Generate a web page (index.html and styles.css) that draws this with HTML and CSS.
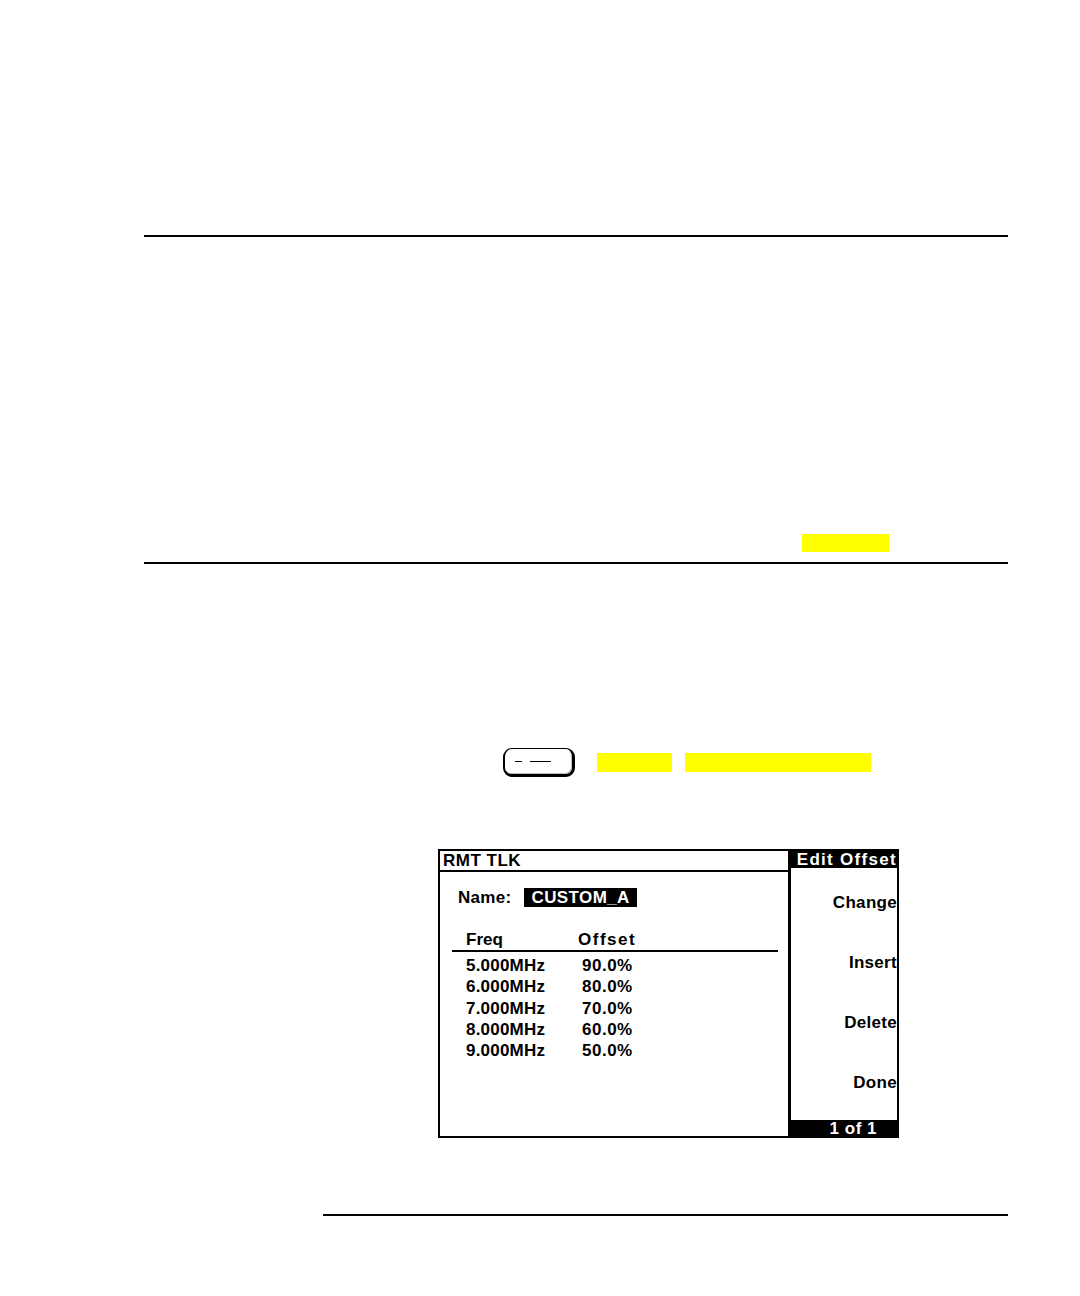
FILE: index.html
```html
<!DOCTYPE html>
<html>
<head>
<meta charset="utf-8">
<title>Edit Offset</title>
<link rel="stylesheet" href="styles.css">
</head>
<body>
<div class="page">
  <div class="rule rule-top"></div>
  <div class="highlight hl-note"></div>
  <div class="rule rule-mid"></div>

  <div class="key-row">
    <div class="key"><span class="dash dash-short"></span><span class="dash dash-long"></span></div>
    <div class="highlight hl-a"></div>
    <div class="highlight hl-b"></div>
  </div>

  <div class="screen">
    <div class="panel">
      <div class="titlebar">RMT TLK</div>
      <div class="name-row"><span class="name-label">Name:</span><span class="name-value">CUSTOM_A</span></div>
      <div class="thead"><span class="c1">Freq</span><span class="c2">Offset</span></div>
      <div class="tbody">
        <div class="trow"><span class="c1">5.000MHz</span><span class="c2">90.0%</span></div>
        <div class="trow"><span class="c1">6.000MHz</span><span class="c2">80.0%</span></div>
        <div class="trow"><span class="c1">7.000MHz</span><span class="c2">70.0%</span></div>
        <div class="trow"><span class="c1">8.000MHz</span><span class="c2">60.0%</span></div>
        <div class="trow"><span class="c1">9.000MHz</span><span class="c2">50.0%</span></div>
      </div>
    </div>
    <div class="softkeys">
      <div class="sk-head">Edit Offset</div>
      <div class="sk-list">
        <div class="sk">Change</div>
        <div class="sk">Insert</div>
        <div class="sk">Delete</div>
        <div class="sk">Done</div>
      </div>
      <div class="sk-foot">1 of 1</div>
    </div>
  </div>

  <div class="rule rule-bottom"></div>
</div>
</body>
</html>
```

FILE: styles.css
```css
html, body {
  margin: 0;
  padding: 0;
  background: #fff;
}

body {
  width: 1080px;
  height: 1296px;
  overflow: hidden;
  font-family: "Liberation Sans", Arial, sans-serif;
  color: #000;
}

.page {
  display: flex;
  flex-direction: column;
  align-items: flex-start;
}

.rule {
  height: 2px;
  background: #000;
}

.rule-top {
  margin: 235px 0 0 144px;
  width: 864px;
}

.highlight {
  background: #ffff00;
}

.hl-note {
  margin: 297px 0 0 802px;
  width: 87px;
  height: 18px;
}

.rule-mid {
  margin: 10px 0 0 144px;
  width: 864px;
}

.key-row {
  margin: 184px 0 0 503px;
  display: flex;
  align-items: center;
  height: 29px;
}

.key {
  box-sizing: border-box;
  width: 72px;
  height: 29px;
  border-style: solid;
  border-color: #000;
  border-width: 1px 3px 3px 2px;
  border-radius: 9px;
  box-shadow: inset -1px -1px 0 #bbb;
  display: flex;
  align-items: center;
  padding-left: 10px;
}

.dash {
  display: block;
  height: 1px;
  background: #000;
}

.dash-short {
  width: 7px;
}

.dash-long {
  width: 21px;
  margin-left: 8px;
}

.hl-a {
  margin-left: 22px;
  width: 75px;
  height: 19px;
}

.hl-b {
  margin-left: 13px;
  width: 186px;
  height: 19px;
}

/* instrument display */
.screen {
  margin: 72px 0 0 438px;
  width: 461px;
  height: 289px;
  box-sizing: border-box;
  border-top: 2px solid #000;
  border-bottom: 2px solid #000;
  border-left: 2px solid #000;
  display: flex;
  font-weight: bold;
  font-size: 17px;
}

.panel {
  width: 348px;
  display: flex;
  flex-direction: column;
}

.titlebar {
  height: 19px;
  line-height: 19px;
  padding-left: 3px;
  border-bottom: 2px solid #000;
  letter-spacing: 0.5px;
}

.name-row {
  margin-top: 16px;
  height: 19px;
  line-height: 19px;
  display: flex;
  padding-left: 18px;
}

.name-label {
  letter-spacing: 0.3px;
}

.name-value {
  margin-left: 13px;
  background: #000;
  color: #fff;
  padding: 0 7px 0 7px;
  letter-spacing: 0.4px;
}

.thead {
  margin: 23px 0 0 12px;
  width: 312px;
  height: 20px;
  line-height: 20px;
  border-bottom: 2px solid #000;
  display: flex;
  padding-left: 14px;
}

.thead .c1 {
  width: 112px;
}

.thead .c2 {
  letter-spacing: 1.5px;
}

.tbody {
  margin-top: 3px;
  padding-left: 26px;
}

.trow {
  display: flex;
  height: 21.25px;
  line-height: 21.25px;
}

.trow .c1 {
  width: 116px;
  letter-spacing: 0.2px;
}

.trow .c2 {
  letter-spacing: 0.5px;
}

.softkeys {
  width: 111px;
  box-sizing: border-box;
  border-left: 3px solid #000;
  border-right: 2px solid #000;
  display: flex;
  flex-direction: column;
}

.sk-head {
  height: 17px;
  line-height: 17px;
  background: #000;
  color: #fff;
  text-align: right;
  letter-spacing: 1.3px;
  white-space: nowrap;
}

.sk-list {
  flex: 1;
  padding-top: 5px;
}

.sk {
  height: 60px;
  line-height: 60px;
  text-align: right;
  letter-spacing: 0.3px;
}

.sk-foot {
  height: 16px;
  line-height: 17px;
  background: #000;
  color: #fff;
  text-align: right;
  padding-right: 20px;
  letter-spacing: 0.5px;
}

.rule-bottom {
  margin: 76px 0 0 323px;
  width: 685px;
}
```
